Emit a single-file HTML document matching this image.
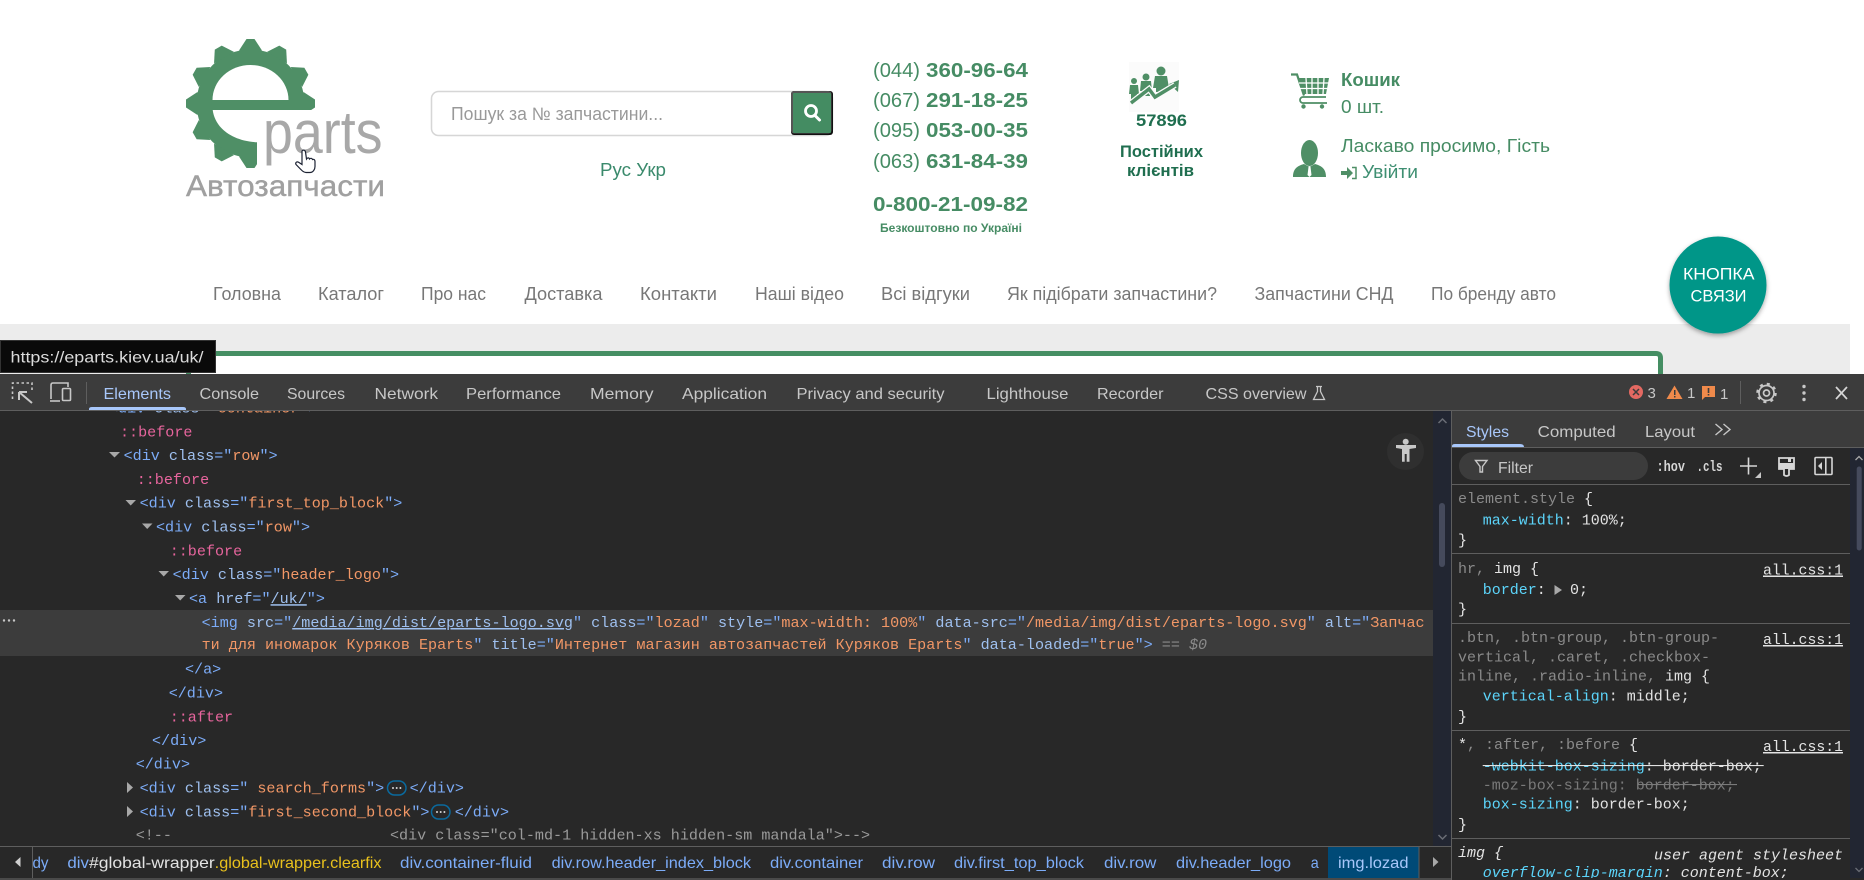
<!DOCTYPE html>
<html lang="uk"><head><meta charset="utf-8"><title>Eparts</title>
<style>
html,body{margin:0;padding:0;background:#fff;width:1864px;height:880px;overflow:hidden}
svg{display:block}
.s{font-family:"Liberation Sans","Noto Sans CJK SC",sans-serif}
.m{font-family:"Liberation Mono","DejaVu Sans Mono",monospace;font-size:15.1px}
.y{font-family:"Liberation Mono","DejaVu Sans Mono",monospace;font-size:15px;fill:#e3e3e3}
.t{fill:#7cacf8}.n{fill:#9fc0ef}.v{fill:#f29766}.p{fill:#e7659d}.c{fill:#9a9a9a}.u{text-decoration:underline}
.g{fill:#8a8a8a}.w{fill:#e6e6e6}.k{fill:#5cd5fb}
.tab{font-size:16px;fill:#c7c7c7}
.gr{fill:#468c64}.nav{font-size:18px;fill:#777}
.bc{font-size:16px;fill:#7cacf8}
</style></head><body>
<svg xmlns="http://www.w3.org/2000/svg" width="1864" height="880" viewBox="0 0 1864 880">
<rect width="1864" height="880" fill="#fff"/>

<!-- logo -->
<g fill="#4f8f66">
<circle cx="250.5" cy="103.5" r="54"/>
<polygon points="239,50.5 246.5,39 254.5,39 262,50.5"/>
<polygon points="239,50.5 246.5,39 254.5,39 262,50.5" transform="rotate(30 250.5 103.5)"/>
<polygon points="239,50.5 246.5,39 254.5,39 262,50.5" transform="rotate(60 250.5 103.5)"/>
<polygon points="239,50.5 246.5,39 254.5,39 262,50.5" transform="rotate(90 250.5 103.5)"/>
<polygon points="239,50.5 246.5,39 254.5,39 262,50.5" transform="rotate(180 250.5 103.5)"/>
<polygon points="239,50.5 246.5,39 254.5,39 262,50.5" transform="rotate(210 250.5 103.5)"/>
<polygon points="239,50.5 246.5,39 254.5,39 262,50.5" transform="rotate(240 250.5 103.5)"/>
<polygon points="239,50.5 246.5,39 254.5,39 262,50.5" transform="rotate(270 250.5 103.5)"/>
<polygon points="239,50.5 246.5,39 254.5,39 262,50.5" transform="rotate(300 250.5 103.5)"/>
<polygon points="239,50.5 246.5,39 254.5,39 262,50.5" transform="rotate(330 250.5 103.5)"/>
</g>
<rect x="257" y="110" width="80" height="70" fill="#fff"/>
<path d="M212.5 100 A38 35 0 0 1 288.5 100 Z" fill="#fff"/>
<path d="M212.7 110 C215 128 232 141 257 142.3 L300 142.3 L300 110 Z" fill="#fff"/>
<rect x="257" y="110" width="80" height="70" fill="#fff"/>
<text class="s" x="263" y="153" font-size="60" fill="#a8a8a8" textLength="119.500" lengthAdjust="spacingAndGlyphs">parts</text>
<text class="s" x="186" y="196" font-size="29.500" fill="#a0a0a0" stroke="#a0a0a0" stroke-width=".4" textLength="199" lengthAdjust="spacingAndGlyphs">Автозапчасти</text>
<path d="M302 151 c1.500 -1.500 3 -1 3.500 1 l1 7 c1 -1.500 2.500 -1.500 3 0 c1 -1 2.500 -1 3 .5 c1 -.5 2.500 0 2.500 2 l0 5 c0 3 -2 6 -5 6 l-4 0 c-3 0 -5 -3 -10 -8 c-1 -2 1 -3.500 3 -2 l3 2 Z" fill="#fff" stroke="#1c2233" stroke-width="1.200"/>

<!-- search -->
<rect x="431.500" y="91.500" width="401" height="44" rx="7" fill="#fff" stroke="#d6d6d6" stroke-width="1.500"/>
<text class="s" x="451" y="120" font-size="18" fill="#999" textLength="212" lengthAdjust="spacingAndGlyphs">Пошук за № запчастини...</text>
<rect x="791" y="91" width="42" height="44" rx="3" fill="#111"/>
<rect x="791" y="91" width="40.500" height="42.500" rx="3" fill="#555"/>
<rect x="793" y="93" width="38" height="40" rx="1" fill="#448c62"/>
<circle cx="811" cy="111" r="5.500" fill="none" stroke="#fff" stroke-width="2.800"/>
<path d="M815 115.500 L819.500 120" stroke="#fff" stroke-width="3" stroke-linecap="round"/>
<text class="s" x="600" y="176" font-size="18" fill="#3a8a6c" textLength="66" lengthAdjust="spacingAndGlyphs">Рус Укр</text>

<!-- phones -->
<g class="s" font-size="20">
<text class="gr" x="873" y="77" textLength="47" lengthAdjust="spacingAndGlyphs">(044)</text>
<text class="gr" x="926" y="77" font-weight="700" textLength="102" lengthAdjust="spacingAndGlyphs">360-96-64</text>
<text class="gr" x="873" y="107" textLength="47" lengthAdjust="spacingAndGlyphs">(067)</text>
<text class="gr" x="926" y="107" font-weight="700" textLength="102" lengthAdjust="spacingAndGlyphs">291-18-25</text>
<text class="gr" x="873" y="137" textLength="47" lengthAdjust="spacingAndGlyphs">(095)</text>
<text class="gr" x="926" y="137" font-weight="700" textLength="102" lengthAdjust="spacingAndGlyphs">053-00-35</text>
<text class="gr" x="873" y="168" textLength="47" lengthAdjust="spacingAndGlyphs">(063)</text>
<text class="gr" x="926" y="168" font-weight="700" textLength="102" lengthAdjust="spacingAndGlyphs">631-84-39</text>
<text class="gr" x="873" y="211" font-weight="700" textLength="155" lengthAdjust="spacingAndGlyphs">0-800-21-09-82</text>
<text class="gr" x="880" y="232" font-size="12" font-weight="700" textLength="142" lengthAdjust="spacingAndGlyphs">Безкоштовно по Україні</text>
</g>

<!-- customers -->
<rect x="1129" y="62" width="50" height="50" fill="#fbfbfb"/>
<g fill="#4f8f66">
<circle cx="1134" cy="81" r="3"/><path d="M1130 85 h8 l1 9 h-2 v6 h-6 v-6 h-2 z"/>
<circle cx="1146" cy="77" r="3.500"/><path d="M1141 81 h10 l1 10 h-2 v5 h-8 v-5 h-2 z"/>
<circle cx="1161" cy="71" r="4.500"/><path d="M1155 76 h12 l2 12 h-3 v4 h-10 v-4 h-3 z"/>
<polygon points="1179,80 1178,92 1169,84"/>
</g>
<polyline points="1131,103 1149,89 1155,97 1175,85" fill="none" stroke="#fbfbfb" stroke-width="6"/>
<polyline points="1131,103 1149,89 1155,97 1175,85" fill="none" stroke="#4f8f66" stroke-width="3.500"/>
<text class="s" x="1136" y="126" font-size="17" font-weight="700" fill="#1f6e4f" textLength="51" lengthAdjust="spacingAndGlyphs">57896</text>
<text class="s" x="1120" y="157" font-size="17" font-weight="700" fill="#1f6e4f" textLength="83" lengthAdjust="spacingAndGlyphs">Постійних</text>
<text class="s" x="1127" y="176" font-size="17" font-weight="700" fill="#1f6e4f" textLength="67" lengthAdjust="spacingAndGlyphs">клієнтів</text>

<!-- cart -->
<path d="M1291 74.500 h6 l7 21" fill="none" stroke="#4f8f66" stroke-width="2.200"/>
<polygon points="1298,78 1329,78 1326,94 1303,94" fill="#4f8f66"/>
<path d="M1306 78 l1 16 M1312 78 v16 M1318 78 v16 M1324 78 l-1 16 M1299 83 h30 M1300 88.500 h28" stroke="#fff" stroke-width="1.300"/>
<path d="M1326 97 h-23 a3 3 0 0 0 0 6 h24" fill="none" stroke="#4f8f66" stroke-width="1.800"/>
<circle cx="1303.500" cy="106.500" r="2.200" fill="#4f8f66"/><circle cx="1322" cy="106.500" r="2.200" fill="#4f8f66"/>
<text class="s gr" x="1341" y="86" font-size="18" font-weight="700" textLength="59" lengthAdjust="spacingAndGlyphs">Кошик</text>
<text class="s gr" x="1341" y="113" font-size="18" textLength="43" lengthAdjust="spacingAndGlyphs">0 шт.</text>

<!-- user -->
<ellipse cx="1309.500" cy="153" rx="8.500" ry="13" fill="#4f8f66"/>
<path d="M1293 177 c0 -8 4 -11 11 -13 l5.500 3 l5.500 -3 c7 2 11 5 11 13 z" fill="#4f8f66"/>
<path d="M1308.500 167 h2 l1 8 l-2 2 l-2 -2 z" fill="#fff"/>
<text class="s gr" x="1341" y="152" font-size="18" textLength="209" lengthAdjust="spacingAndGlyphs">Ласкаво просимо, Гість</text>
<path d="M1341 171 h6 v-4 l6 6 l-6 6 v-4 h-6 z" fill="#4f8f66"/>
<path d="M1352 167.500 h4 v11 h-4" fill="none" stroke="#4f8f66" stroke-width="1.500"/>
<text class="s" x="1362" y="178" font-size="18" fill="#3f8f72" textLength="56" lengthAdjust="spacingAndGlyphs">Увійти</text>

<!-- nav -->
<g class="s nav">
<text x="213" y="300" textLength="68" lengthAdjust="spacingAndGlyphs">Головна</text>
<text x="318" y="300" textLength="66" lengthAdjust="spacingAndGlyphs">Каталог</text>
<text x="421" y="300" textLength="65" lengthAdjust="spacingAndGlyphs">Про нас</text>
<text x="524.500" y="300" textLength="78" lengthAdjust="spacingAndGlyphs">Доставка</text>
<text x="640" y="300" textLength="77" lengthAdjust="spacingAndGlyphs">Контакти</text>
<text x="755" y="300" textLength="89" lengthAdjust="spacingAndGlyphs">Наші відео</text>
<text x="881" y="300" textLength="89" lengthAdjust="spacingAndGlyphs">Всі відгуки</text>
<text x="1007" y="300" textLength="210" lengthAdjust="spacingAndGlyphs">Як підібрати запчастини?</text>
<text x="1254.500" y="300" textLength="139" lengthAdjust="spacingAndGlyphs">Запчастини СНД</text>
<text x="1431" y="300" textLength="125" lengthAdjust="spacingAndGlyphs">По бренду авто</text>
</g>

<!-- gray content -->
<rect x="0" y="324" width="1850" height="60" fill="#ececec"/>
<path d="M188.500 380 V358 Q188.500 353.500 193 353.500 H1656 Q1660.500 353.500 1660.500 358 V380 Z" fill="#fff" stroke="#458e63" stroke-width="5"/>

<!-- floating button -->
<defs><filter id="sh" x="-30%" y="-30%" width="160%" height="160%"><feDropShadow dx="0" dy="2" stdDeviation="2.500" flood-color="#000" flood-opacity=".35"/></filter></defs>
<circle cx="1718" cy="285" r="48.500" fill="#009688" filter="url(#sh)"/>
<text class="s" x="1683" y="279.500" font-size="17" fill="#fff" textLength="71.500" lengthAdjust="spacingAndGlyphs">КНОПКА</text>
<text class="s" x="1690.500" y="301.500" font-size="17" fill="#fff" textLength="56" lengthAdjust="spacingAndGlyphs">СВЯЗИ</text>

<!-- tooltip -->
<rect x="0" y="340" width="216" height="33" fill="#0a0a0a"/>
<rect x=".5" y="340.500" width="215" height="32" fill="none" stroke="#333"/>
<text class="s" x="10.500" y="362.500" font-size="16" fill="#dcdcdc" textLength="193" lengthAdjust="spacingAndGlyphs">https://eparts.kiev.ua/uk/</text>

<!-- devtools base -->
<rect x="0" y="374" width="1864" height="506" fill="#282828"/>
<rect x="0" y="374" width="1864" height="36" fill="#3c3c3c"/>
<rect x="0" y="410" width="1864" height="1" fill="#5e5e5e"/>

<!-- toolbar icons -->
<g fill="none" stroke="#c7c7c7" stroke-width="1.600">
<path d="M12.500 399 V383 H32 V390 M12.500 383" stroke-dasharray="2.500 2.500"/>
<path d="M19 392 h8 M19 392 v8 M19 392 l13 11" stroke-width="2"/>
<path d="M51 399 V385 Q51 383 53 383 H68 V387"/>
<path d="M50 401 H60"/>
<rect x="62.500" y="388.500" width="8" height="12" rx="1"/>
</g>
<rect x="86" y="382" width="1" height="22" fill="#5e5e5e"/>
<g class="s tab">
<text x="103.500" y="399" style="fill:#a8c7fa" textLength="67.500" lengthAdjust="spacingAndGlyphs">Elements</text>
<text x="199.500" y="399" textLength="59.500" lengthAdjust="spacingAndGlyphs">Console</text>
<text x="287" y="399" textLength="58" lengthAdjust="spacingAndGlyphs">Sources</text>
<text x="374.500" y="399" textLength="63.500" lengthAdjust="spacingAndGlyphs">Network</text>
<text x="466" y="399" textLength="95" lengthAdjust="spacingAndGlyphs">Performance</text>
<text x="590" y="399" textLength="63.500" lengthAdjust="spacingAndGlyphs">Memory</text>
<text x="682" y="399" textLength="85" lengthAdjust="spacingAndGlyphs">Application</text>
<text x="796.500" y="399" textLength="148" lengthAdjust="spacingAndGlyphs">Privacy and security</text>
<text x="986.500" y="399" textLength="82" lengthAdjust="spacingAndGlyphs">Lighthouse</text>
<text x="1097" y="399" textLength="66.500" lengthAdjust="spacingAndGlyphs">Recorder</text>
<text x="1205.500" y="399" textLength="101" lengthAdjust="spacingAndGlyphs">CSS overview</text>
</g>
<path d="M1316 386.500 h6 M1317.500 386.500 v5 l-4 8 h11 l-4 -8 v-5" fill="none" stroke="#c7c7c7" stroke-width="1.300"/>
<path d="M89 410 V409 Q89 407 92 407 H183 Q186 407 186 409 V410 Z" fill="#a8c7fa"/>

<!-- status icons -->
<circle cx="1636" cy="392" r="7" fill="#e46962"/>
<path d="M1633 389 l6 6 M1639 389 l-6 6" stroke="#3c3c3c" stroke-width="1.500"/>
<text class="s" x="1647.500" y="398" font-size="15" fill="#c7c7c7">3</text>
<polygon points="1674.500,385.500 1682.500,399 1666.500,399" fill="#f08a4b"/>
<rect x="1674" y="390" width="1.500" height="5" fill="#3c3c3c"/><rect x="1674" y="396" width="1.500" height="1.500" fill="#3c3c3c"/>
<text class="s" x="1687" y="398" font-size="15" fill="#c7c7c7">1</text>
<path d="M1702 386 h13 v11 h-10 l-3 3 z" fill="#f08a4b"/>
<rect x="1707.700" y="388" width="1.600" height="5" fill="#3c3c3c"/><rect x="1707.700" y="394" width="1.600" height="1.500" fill="#3c3c3c"/>
<text class="s" x="1720" y="399" font-size="15" fill="#c7c7c7">1</text>
<rect x="1740" y="381" width="1" height="23" fill="#5e5e5e"/>
<circle cx="1766.500" cy="393" r="3" fill="none" stroke="#c7c7c7" stroke-width="1.700"/>
<circle cx="1766.500" cy="393" r="7.500" fill="none" stroke="#c7c7c7" stroke-width="1.700"/>
<circle cx="1766.500" cy="393" r="9" fill="none" stroke="#c7c7c7" stroke-width="2.500" stroke-dasharray="3 4.070"/>
<g fill="#c7c7c7"><circle cx="1804" cy="386.500" r="1.700"/><circle cx="1804" cy="393" r="1.700"/><circle cx="1804" cy="399.500" r="1.700"/></g>
<path d="M1836 387 L1847 399 M1847 387 L1836 399" stroke="#d6d6d6" stroke-width="1.700"/>

<!-- selected row -->
<rect x="0" y="610" width="1433" height="46" fill="#3c3c3c"/>
<g fill="#c7c7c7"><circle cx="4" cy="620.500" r="1.200"/><circle cx="9" cy="620.500" r="1.200"/><circle cx="14" cy="620.500" r="1.200"/></g>

<!-- tree -->
<clipPath id="tr"><rect x="0" y="411" width="1433" height="435"/></clipPath>
<g clip-path="url(#tr)" class="m">
<text x="109" y="412.500"><tspan class="t">&lt;div </tspan><tspan class="n">class</tspan><tspan class="t">="</tspan><tspan class="v">container</tspan><tspan class="t">"&gt;</tspan></text>
<text x="120" y="436.300" class="p">::before</text>
<text x="123.600" y="460.200"><tspan class="t">&lt;div </tspan><tspan class="n">class</tspan><tspan class="t">="</tspan><tspan class="v">row</tspan><tspan class="t">"&gt;</tspan></text>
<text x="136.700" y="484.200" class="p">::before</text>
<text x="139.600" y="507.700"><tspan class="t">&lt;div </tspan><tspan class="n">class</tspan><tspan class="t">="</tspan><tspan class="v">first_top_block</tspan><tspan class="t">"&gt;</tspan></text>
<text x="156" y="531.700"><tspan class="t">&lt;div </tspan><tspan class="n">class</tspan><tspan class="t">="</tspan><tspan class="v">row</tspan><tspan class="t">"&gt;</tspan></text>
<text x="169.700" y="555.700" class="p">::before</text>
<text x="172.600" y="579.200"><tspan class="t">&lt;div </tspan><tspan class="n">class</tspan><tspan class="t">="</tspan><tspan class="v">header_logo</tspan><tspan class="t">"&gt;</tspan></text>
<text x="189" y="603.200"><tspan class="t">&lt;a </tspan><tspan class="n">href</tspan><tspan class="t">="</tspan><tspan class="n u">/uk/</tspan><tspan class="t">"&gt;</tspan></text>
<text x="201.600" y="627"><tspan class="t">&lt;img </tspan><tspan class="n">src</tspan><tspan class="t">="</tspan><tspan class="n u">/media/img/dist/eparts-logo.svg</tspan><tspan class="t">" </tspan><tspan class="n">class</tspan><tspan class="t">="</tspan><tspan class="v">lozad</tspan><tspan class="t">" </tspan><tspan class="n">style</tspan><tspan class="t">="</tspan><tspan class="v">max-width: 100%</tspan><tspan class="t">" </tspan><tspan class="n">data-src</tspan><tspan class="t">="</tspan><tspan class="v">/media/img/dist/eparts-logo.svg</tspan><tspan class="t">" </tspan><tspan class="n">alt</tspan><tspan class="t">="</tspan><tspan class="v">Запчас</tspan></text>
<text x="201.600" y="649"><tspan class="v">ти для иномарок Куряков Eparts</tspan><tspan class="t">" </tspan><tspan class="n">title</tspan><tspan class="t">="</tspan><tspan class="v">Интернет магазин автозапчастей Куряков Eparts</tspan><tspan class="t">" </tspan><tspan class="n">data-loaded</tspan><tspan class="t">="</tspan><tspan class="v">true</tspan><tspan class="t">"&gt;</tspan><tspan fill="#8a8a8a"> == </tspan><tspan fill="#8a8a8a" font-style="italic">$0</tspan></text>
<text x="185" y="673.500" class="t">&lt;/a&gt;</text>
<text x="168.700" y="697.500" class="t">&lt;/div&gt;</text>
<text x="169.700" y="721.500" class="p">::after</text>
<text x="152" y="745" class="t">&lt;/div&gt;</text>
<text x="135.700" y="768.700" class="t">&lt;/div&gt;</text>
<text x="139.600" y="792.700"><tspan class="t">&lt;div </tspan><tspan class="n">class</tspan><tspan class="t">=" </tspan><tspan class="v">search_forms</tspan><tspan class="t">"&gt;</tspan></text>
<text x="409.600" y="792.700" class="t">&lt;/div&gt;</text>
<text x="139.600" y="816.700"><tspan class="t">&lt;div </tspan><tspan class="n">class</tspan><tspan class="t">="</tspan><tspan class="v">first_second_block</tspan><tspan class="t">"&gt;</tspan></text>
<text x="454.700" y="816.700" class="t">&lt;/div&gt;</text>
<text x="135.700" y="839.500" class="c">&lt;!--</text>
<text x="390" y="839.500" class="c">&lt;div class="col-md-1 hidden-xs hidden-sm mandala"&gt;--&gt;</text>
</g>
<!-- tree arrows -->
<g fill="#a8a8a8">
<polygon points="109,452 120,452 114.500,457.500"/>
<polygon points="125.500,500 136,500 130.700,505.500"/>
<polygon points="142,523.500 152.500,523.500 147.200,529"/>
<polygon points="158.500,571 169,571 163.700,576.500"/>
<polygon points="175,595 185.500,595 180.200,600.500"/>
<polygon points="127,782 133,787.500 127,793"/>
<polygon points="127,806 133,811.500 127,817"/>
</g>
<rect x="387.500" y="781" width="18.500" height="14" rx="7" fill="#282828" stroke="#0a6a9e" stroke-width="1.500"/>
<rect x="431.500" y="805" width="18.500" height="14" rx="7" fill="#282828" stroke="#0a6a9e" stroke-width="1.500"/>
<g fill="#d6d6d6"><circle cx="393" cy="788" r="1"/><circle cx="396.700" cy="788" r="1"/><circle cx="400.400" cy="788" r="1"/><circle cx="437" cy="812" r="1"/><circle cx="440.700" cy="812" r="1"/><circle cx="444.400" cy="812" r="1"/></g>

<!-- accessibility -->
<circle cx="1405.500" cy="451.500" r="18.500" fill="#2f2f2f"/>
<circle cx="1405.700" cy="441.700" r="3" fill="#c8c8c8"/>
<path d="M1396 445 H1416 V448 L1409.500 449 V461.700 H1406.700 V454 H1404.700 V461.700 H1402 V449 L1396 448 Z" fill="#c8c8c8"/>

<!-- breadcrumb -->
<rect x="0" y="846" width="1452" height="34" fill="#282828"/>
<rect x="0" y="846" width="1452" height="1" fill="#5e5e5e"/>
<rect x="0" y="878" width="1864" height="2" fill="#4a4a4a"/>
<rect x="32" y="847" width="1" height="31" fill="#5e5e5e"/>
<polygon points="20.500,857 20.500,867 15,862" fill="#d0d0d0"/>
<g class="s bc">
<text x="32.500" y="868" textLength="16" lengthAdjust="spacingAndGlyphs">dy</text>
<text x="67.400" y="868" textLength="21.600" lengthAdjust="spacingAndGlyphs">div</text>
<text x="89" y="868" style="fill:#e3e3e3" textLength="125.700" lengthAdjust="spacingAndGlyphs">#global-wrapper</text>
<text x="214.700" y="868" style="fill:#e8c11d" textLength="166.800" lengthAdjust="spacingAndGlyphs">.global-wrapper.clearfix</text>
<text x="400" y="868" textLength="132" lengthAdjust="spacingAndGlyphs">div.container-fluid</text>
<text x="551.600" y="868" textLength="199.400" lengthAdjust="spacingAndGlyphs">div.row.header_index_block</text>
<text x="770" y="868" textLength="93" lengthAdjust="spacingAndGlyphs">div.container</text>
<text x="882" y="868" textLength="53" lengthAdjust="spacingAndGlyphs">div.row</text>
<text x="954" y="868" textLength="130" lengthAdjust="spacingAndGlyphs">div.first_top_block</text>
<text x="1104" y="868" textLength="52.400" lengthAdjust="spacingAndGlyphs">div.row</text>
<text x="1176" y="868" textLength="115" lengthAdjust="spacingAndGlyphs">div.header_logo</text>
<text x="1310.700" y="868" textLength="8" lengthAdjust="spacingAndGlyphs">a</text>
</g>
<rect x="1328" y="847" width="90.500" height="31" fill="#004a77"/>
<text class="s" x="1338" y="868" font-size="16" fill="#a8c7fa" textLength="70.500" lengthAdjust="spacingAndGlyphs">img.lozad</text>
<rect x="1418.500" y="847" width="1" height="31" fill="#5e5e5e"/>
<polygon points="1433,857 1433,867 1438.500,862" fill="#a8a8a8"/>

<!-- elements scrollbar -->
<rect x="1433" y="411" width="18" height="435" fill="#222632"/>
<rect x="1439" y="503" width="6" height="64" rx="3" fill="#454a5c"/>
<path d="M1438.500 423 l4 -4 l4 4" fill="none" stroke="#6a6d75" stroke-width="1.500"/>
<path d="M1438.500 835 l4 4 l4 -4" fill="none" stroke="#6a6d75" stroke-width="1.500"/>

<!-- right panel -->
<rect x="1451" y="411" width="413" height="469" fill="#282828"/>
<rect x="1451" y="411" width="1" height="469" fill="#5e5e5e"/>
<rect x="1452" y="411" width="412" height="36" fill="#3c3c3c"/>
<rect x="1452" y="447" width="412" height="1" fill="#5e5e5e"/>
<g class="s tab">
<text x="1466" y="437" style="fill:#a8c7fa" textLength="43" lengthAdjust="spacingAndGlyphs">Styles</text>
<text x="1537.700" y="437" textLength="78" lengthAdjust="spacingAndGlyphs">Computed</text>
<text x="1645" y="437" textLength="50" lengthAdjust="spacingAndGlyphs">Layout</text>
</g>
<path d="M1715.500 424 l6.500 5.500 l-6.500 5.500 M1723.500 424 l6.500 5.500 l-6.500 5.500" fill="none" stroke="#c7c7c7" stroke-width="1.400"/>
<path d="M1452 447 V446 Q1452 444 1455 444 H1520 Q1524 444 1524 447 Z" fill="#a8c7fa"/>

<rect x="1459" y="452" width="189" height="28" rx="14" fill="#3c3c3c"/>
<path d="M1475.500 460.500 H1487 L1482.500 466.500 V472 H1480 V466.500 Z" fill="none" stroke="#c7c7c7" stroke-width="1.400"/>
<text class="s" x="1498" y="473" font-size="16" fill="#c7c7c7" textLength="35" lengthAdjust="spacingAndGlyphs">Filter</text>
<text class="y" x="1656.500" y="471" font-weight="700" style="fill:#d6d6d6" textLength="28.500" lengthAdjust="spacingAndGlyphs">:hov</text>
<text class="y" x="1696.500" y="471" font-weight="700" style="fill:#d6d6d6" textLength="26" lengthAdjust="spacingAndGlyphs">.cls</text>
<path d="M1740 466 H1757 M1748.500 457.500 V474.500" stroke="#d6d6d6" stroke-width="1.600"/>
<polygon points="1755,478 1761,478 1761,472" fill="#c7c7c7"/>
<path d="M1779 458 H1794 V469 H1789 V475 Q1786.500 477 1784 475 V469 H1779 Z" fill="none" stroke="#d6d6d6" stroke-width="1.800"/>
<rect x="1779" y="463" width="15" height="6" fill="#d6d6d6"/>
<rect x="1788" y="458" width="3" height="4" fill="#d6d6d6"/>
<rect x="1815" y="457.500" width="17" height="17" rx="1" fill="none" stroke="#d6d6d6" stroke-width="1.600"/>
<rect x="1825" y="458" width="1.600" height="16" fill="#d6d6d6"/>
<polygon points="1822,462 1822,470 1818,466" fill="#d6d6d6"/>

<rect x="1452" y="484" width="398" height="1" fill="#5e5e5e"/>

<!-- styles -->
<clipPath id="st"><rect x="1452" y="485" width="398" height="393"/></clipPath>
<g clip-path="url(#st)">
<text class="y" x="1458" y="503"><tspan class="g">element.style</tspan> {</text>
<text class="y" x="1482.700" y="524.500"><tspan class="k">max-width</tspan>: 100%;</text>
<text class="y" x="1458" y="544.500">}</text>
<rect x="1452" y="553" width="398" height="1" fill="#5e5e5e"/>
<text class="y" x="1458" y="573"><tspan class="g">hr, </tspan>img {</text>
<text class="y" x="1482.700" y="594"><tspan class="k">border</tspan>:</text>
<text class="y" x="1570" y="594">0;</text>
<polygon points="1554.500,585 1554.500,595 1562,590" fill="#a8a8a8"/>
<text class="y" x="1458" y="613.500">}</text>
<rect x="1452" y="623" width="398" height="1" fill="#5e5e5e"/>
<text class="y g" x="1458" y="642" style="fill:#8a8a8a">.btn, .btn-group, .btn-group-</text>
<text class="y g" x="1458" y="661.500" style="fill:#8a8a8a">vertical, .caret, .checkbox-</text>
<text class="y" x="1458" y="680.500"><tspan class="g">inline, .radio-inline, </tspan>img {</text>
<text class="y" x="1482.700" y="700.500"><tspan class="k">vertical-align</tspan>: middle;</text>
<text class="y" x="1458" y="721">}</text>
<rect x="1452" y="730" width="398" height="1" fill="#5e5e5e"/>
<text class="y" x="1458" y="749"><tspan>*</tspan><tspan class="g">, :after, :before </tspan><tspan>{</tspan></text>
<text class="y" x="1482.700" y="770.500"><tspan class="k">-webkit-box-sizing</tspan>: border-box;</text>
<rect x="1482.700" y="765" width="281" height="1.100" fill="#e3e3e3"/>
<text class="y" x="1482.700" y="789.500" style="fill:#7a7a7a">-moz-box-sizing: border-box;</text>
<rect x="1638" y="784" width="99" height="1.100" fill="#7a7a7a"/>
<text class="y" x="1482.700" y="808.500"><tspan class="k">box-sizing</tspan>: border-box;</text>
<text class="y" x="1458" y="829">}</text>
<rect x="1452" y="838" width="398" height="1" fill="#5e5e5e"/>
<text class="y" x="1458" y="857" font-style="italic">img {</text>
<text class="y" x="1654" y="859.500" font-style="italic" textLength="189" lengthAdjust="spacingAndGlyphs">user agent stylesheet</text>
<text class="y" x="1482.700" y="877" font-style="italic"><tspan class="k">overflow-clip-margin</tspan>: content-box;</text>
<text class="y u" x="1763" y="574.500" textLength="80" lengthAdjust="spacingAndGlyphs">all.css:1</text>
<text class="y u" x="1763" y="644" textLength="80" lengthAdjust="spacingAndGlyphs">all.css:1</text>
<text class="y u" x="1763" y="751" textLength="80" lengthAdjust="spacingAndGlyphs">all.css:1</text>
</g>

<!-- styles scrollbar -->
<rect x="1850" y="448" width="14" height="430" fill="#222632"/>
<rect x="1856.700" y="466.500" width="5" height="84" rx="2.500" fill="#454a5c"/>
<path d="M1855.500 460 l3.500 -3.500 l3.500 3.500" fill="none" stroke="#a8a8a8" stroke-width="1.300"/>
<path d="M1855.500 868 l3.500 3.500 l3.500 -3.500" fill="none" stroke="#6a6d75" stroke-width="1.300"/>
</svg>
</body></html>
